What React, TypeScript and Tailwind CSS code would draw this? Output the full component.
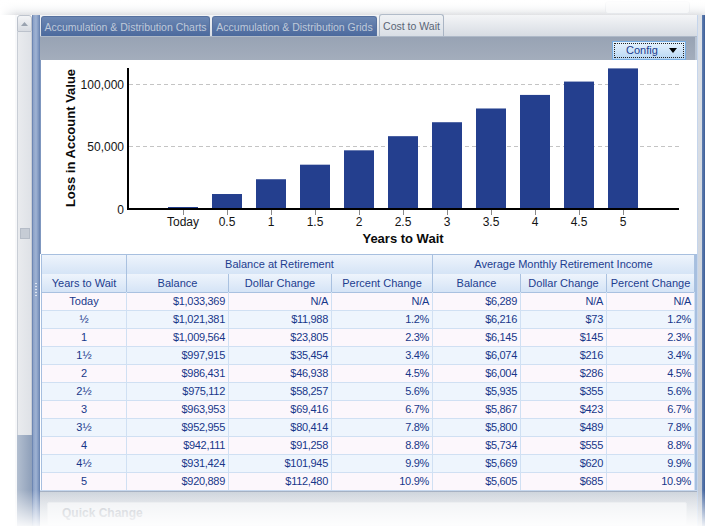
import React from 'react';

const rows = [
  ['Today', '$1,033,369', 'N/A', 'N/A', '$6,289', 'N/A', 'N/A'],
  ['½', '$1,021,381', '$11,988', '1.2%', '$6,216', '$73', '1.2%'],
  ['1', '$1,009,564', '$23,805', '2.3%', '$6,145', '$145', '2.3%'],
  ['1½', '$997,915', '$35,454', '3.4%', '$6,074', '$216', '3.4%'],
  ['2', '$986,431', '$46,938', '4.5%', '$6,004', '$286', '4.5%'],
  ['2½', '$975,112', '$58,257', '5.6%', '$5,935', '$355', '5.6%'],
  ['3', '$963,953', '$69,416', '6.7%', '$5,867', '$423', '6.7%'],
  ['3½', '$952,955', '$80,414', '7.8%', '$5,800', '$489', '7.8%'],
  ['4', '$942,111', '$91,258', '8.8%', '$5,734', '$555', '8.8%'],
  ['4½', '$931,424', '$101,945', '9.9%', '$5,669', '$620', '9.9%'],
  ['5', '$920,889', '$112,480', '10.9%', '$5,605', '$685', '10.9%'],
];

const losses = [0, 11988, 23805, 35454, 46938, 58257, 69416, 80414, 91258, 101945, 112480];
const xLabels = ['Today', '0.5', '1', '1.5', '2', '2.5', '3', '3.5', '4', '4.5', '5'];

const colWidths = 'grid-cols-[85px_102px_103px_101px_88px_86px_88px]';

function Chart() {
  const zeroY = 149;
  const scale = 62.5 / 50000;
  return (
    <svg width={657} height={194} className="block">
      {/* grid */}
      <line x1={88} x2={638} y1={24.5} y2={24.5} stroke="#c4c4c4" strokeDasharray="4 3" />
      <line x1={88} x2={638} y1={86.5} y2={86.5} stroke="#c4c4c4" strokeDasharray="4 3" />

      {losses.map((v, i) => {
        const cx = 142 + 44 * i;
        const top = i === 0 ? 147 : zeroY - v * scale;
        return <rect key={i} x={cx - 15} y={top} width={30} height={148 - top} fill="#243f8e" />;
      })}

      {/* axes */}
      <line x1={87} x2={87} y1={8} y2={150} stroke="#000" strokeWidth={2} />
      <line x1={86} x2={638} y1={149} y2={149} stroke="#000" strokeWidth={2} />

      {xLabels.map((l, i) => {
        const cx = 142 + 44 * i;
        return (
          <g key={l}>
            <line x1={cx + 0.5} x2={cx + 0.5} y1={150} y2={155} stroke="#8a8a8a" />
            <text x={cx} y={166} textAnchor="middle" fontSize={12} fill="#141414">{l}</text>
          </g>
        );
      })}

      <text x={83} y={29} textAnchor="end" fontSize={12} fill="#141414">100,000</text>
      <text x={83} y={91} textAnchor="end" fontSize={12} fill="#141414">50,000</text>
      <text x={83} y={154} textAnchor="end" fontSize={12} fill="#141414">0</text>

      <text x={362} y={183} textAnchor="middle" fontSize={13} fontWeight="bold" fill="#0a0a0a">Years to Wait</text>
      <text transform="translate(34,78) rotate(-90)" textAnchor="middle" fontSize={13} fontWeight="bold" fill="#0a0a0a">
        Loss in Account Value
      </text>
    </svg>
  );
}

function Grid() {
  const head = 'bg-linear-to-b from-[#eef4fc] to-[#d5e4f6] border-r border-b border-[#a9c1e0] text-center text-[#1d3d8f]';
  return (
    <div className="ml-[1px] w-[656px] border-l border-t border-r-2 border-[#a7bfdf] bg-white text-[11px]">
      <div className={`grid ${colWidths} h-[19px] leading-[19px]`}>
        <div className={head}></div>
        <div className={`${head} col-span-3`}>Balance at Retirement</div>
        <div className={`${head} col-span-3`}>Average Monthly Retirement Income</div>
      </div>
      <div className={`grid ${colWidths} h-[18px] leading-[18px]`}>
        {['Years to Wait', 'Balance', 'Dollar Change', 'Percent Change', 'Balance', 'Dollar Change', 'Percent Change'].map((h, i) => (
          <div key={i} className={head}>{h}</div>
        ))}
      </div>
      {rows.map((r, ri) => (
        <div key={ri} className={`grid ${colWidths} h-[18px] leading-[18px] text-[#18378a] ${ri % 2 === 0 ? 'bg-[#fcf7fc]' : 'bg-[#eef5fd]'}`}>
          {r.map((c, ci) => (
            <div
              key={ci}
              className={`border-r border-b border-[#d0e0f3] whitespace-nowrap ${ci === 0 ? 'text-center' : 'text-right pr-[3px] tracking-[-0.3px]'}`}
            >
              {c}
            </div>
          ))}
        </div>
      ))}
    </div>
  );
}

function Tabs() {
  const tab = 'h-[20px] rounded-t-[3px] bg-linear-to-b from-[#6c87b3] to-[#4b699d] text-[#bfc9d9] text-[10.5px] leading-[20px] text-center whitespace-nowrap border-t border-x border-[#56719f]';
  return (
    <div className="h-[22px] flex items-end gap-[2px] pl-[1px] bg-linear-to-b from-[#f4f5f7] to-[#d7dce3] border-b border-[#aeb9c8]">
      <div className={`${tab} w-[169px]`}>Accumulation &amp; Distribution Charts</div>
      <div className={`${tab} w-[165px]`}>Accumulation &amp; Distribution Grids</div>
      <div className="h-[22px] w-[65px] rounded-t-[3px] bg-linear-to-b from-[#f0f2f5] to-[#d9dee5] border-t border-x border-[#aab5c4] text-[#5a6576] text-[10.5px] leading-[22px] text-center whitespace-nowrap">
        Cost to Wait
      </div>
    </div>
  );
}

function Toolbar() {
  return (
    <div className="h-[24px] flex justify-end items-start pr-[9px] pt-[4px] bg-linear-to-b from-[#98a3b4] to-[#a3adbc] border-r-2 border-[#b9c4d3]">
      <div className="w-[74px] h-[19px] border border-[#78ade2] bg-linear-to-b from-[#e7f3fe] to-[#b9d8f4] p-[1px]">
        <div className="h-full border border-dotted border-[#222] flex items-center pl-[11px] text-[11px] text-[#1c3d8e] leading-none">
          Config
          <svg width={8} height={5} className="ml-[11px]">
            <path d="M0 0 L8 0 L4 5 Z" fill="#000" />
          </svg>
        </div>
      </div>
    </div>
  );
}

function Scrollbar() {
  return (
    <div className="w-[17px] flex flex-col border-l-2 border-[#f7f8fa]">
      <div className="h-[17px] rounded-t-[3px] border border-[#bcc2cc] bg-linear-to-b from-[#f3f4f6] to-[#d8dce2] flex items-center justify-center">
        <svg width={7} height={4}>
          <path d="M0 4 L7 4 L3.5 0 Z" fill="#9aa3b0" />
        </svg>
      </div>
      <div className="h-[403px] bg-linear-to-r from-[#e9ebee] to-[#dfe2e7] border-x border-[#c9ced6] flex flex-col items-center pt-[196px]">
        <div className="w-[10px] h-[11px] bg-[#c6ccd5] border border-[#b5bcc7]"></div>
      </div>
      <div className="flex-1 bg-linear-to-r from-[#b3bfd0] to-[#8e9fb9]"></div>
    </div>
  );
}

function Splitter() {
  return (
    <div className="w-[8px] bg-linear-to-r from-[#8aa0c6] via-[#9fb3d3] to-[#7891bb] border-x border-[#6d87b3] flex flex-col items-center pt-[268px] gap-[2px]">
      {[0, 1, 2, 3, 4].map((i) => (
        <div key={i} className="w-[2px] h-[1px] bg-[#dde5f1]"></div>
      ))}
    </div>
  );
}

export default function App() {
  return (
    <div className="relative w-[705px] h-[526px] overflow-hidden bg-white [font-family:'Liberation_Sans',Arial,sans-serif]">
      <div className="h-[15px] flex justify-end pr-[15px] pt-[1px] bg-linear-to-b from-white to-[#eceef1]">
        <div className="w-[85px] h-[13px] rounded-[3px] border border-[#e1e4e8] bg-[#f4f5f7]"></div>
      </div>
      <div className="flex h-[511px] pl-[15px] shadow-[0_0_10px_rgba(0,0,0,0.12)]">
        <Scrollbar />
        <Splitter />
        <div className="w-[657px] flex flex-col">
          <Tabs />
          <Toolbar />
          <div className="h-[194px] bg-white border-l border-[#7f97bf]">
            <Chart />
          </div>
          <Grid />
          <div className="h-[2px] bg-[#c6d7ee]"></div>
          <div className="h-[4px] bg-[#a2aec1]"></div>
          <div className="flex-1 bg-linear-to-b from-[#cdd3db] to-[#e3e6ea] pl-[7px] pt-[10px]">
            <div className="h-[24px] w-[640px] rounded-[2px] border border-[#e4e7eb] bg-[#eef0f3] pl-[14px] text-[12px] font-bold text-[#b7bcc4] leading-[20px]">
              Quick Change
            </div>
          </div>
        </div>
        <div className="w-[8px] flex">
          <div className="w-[1px] bg-[#c5d5ec]"></div>
          <div className="w-[4px] bg-linear-to-b from-[#dfe3e9] to-[#c3cad4]"></div>
          <div className="w-[3px] bg-linear-to-r from-[#5f7fb2] to-[#3f5f97]"></div>
        </div>
      </div>

      {/* fading edges over the window */}
      <div className="pointer-events-none absolute inset-x-0 top-0 h-[16px] bg-linear-to-b from-white to-transparent"></div>
      <div className="pointer-events-none absolute inset-y-0 left-0 w-[17px] bg-linear-to-r from-white to-transparent"></div>
      <div className="pointer-events-none absolute inset-x-0 bottom-0 h-[36px] bg-linear-to-t from-white/90 to-transparent"></div>
    </div>
  );
}
